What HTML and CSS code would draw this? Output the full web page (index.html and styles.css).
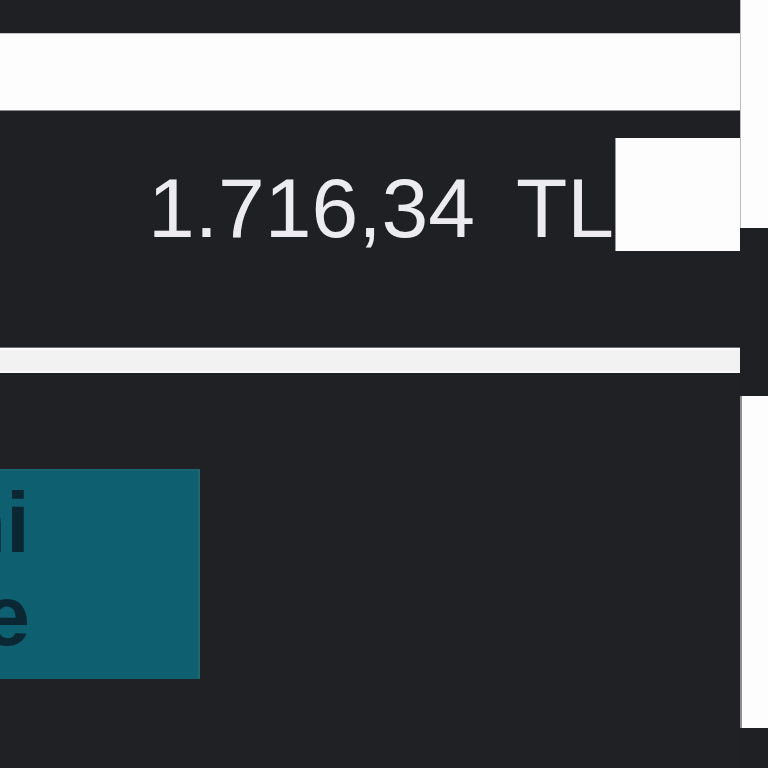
FILE: index.html
```html
<!DOCTYPE html>
<html lang="tr">
<head>
<meta charset="utf-8">
<title>Ödeme</title>
<link rel="stylesheet" href="styles.css">
</head>
<body>
<div class="page">
  <main class="main">
    <div class="top-band"></div>
    <div class="white-band"></div>
    <section class="amount-row">
      <div class="amount"><span class="amount-value">1.716,34</span><span class="amount-currency">TL</span></div>
      <div class="amount-box"></div>
    </section>
    <div class="divider"></div>
    <section class="lower">
      <div class="cta">
        <div class="cta-text">
          <span class="cta-line">Ekstreni</span>
          <span class="cta-line">Görüntüle</span>
        </div>
      </div>
    </section>
  </main>
  <aside class="side">
    <div class="side-top"></div>
    <div class="side-gap"></div>
    <div class="side-panel"></div>
  </aside>
</div>
</body>
</html>
```

FILE: styles.css
```css
html, body {
  margin: 0;
  padding: 0;
  background: #202125;
  overflow: hidden;
}

.page {
  display: grid;
  grid-template-columns: 740px 28px;
  width: 768px;
  height: 768px;
  font-family: "Liberation Sans", Arial, sans-serif;
}

.main {
  display: flex;
  flex-direction: column;
  min-width: 0;
}

.top-band {
  height: 33px;
  background: #1f2023;
}

.white-band {
  height: 76px;
  background: #fdfdfd;
  border-top: 1px solid #c9c9cc;
  border-bottom: 1px solid #8e8e92;
}

.amount-row {
  height: 237px;
  display: flex;
  justify-content: flex-end;
  align-items: flex-start;
  padding-top: 27px;
  box-sizing: border-box;
  background: #1f2024;
}

.amount {
  font-size: 84px;
  line-height: 113px;
  margin-top: 14px;
  margin-right: 1px;
  color: #ececf0;
  white-space: nowrap;
}

.amount-currency {
  margin-left: 41px;
}

.amount-box {
  width: 125px;
  height: 113px;
  background: #fdfdfd;
  border-left: 1px solid #9a9a9e;
  box-sizing: border-box;
}

.divider {
  height: 25px;
  background: #f2f2f3;
  border-top: 2px solid #fafafa;
  border-bottom: 2px solid #fafafa;
  box-sizing: border-box;
  box-shadow: 0 -1px 0 #6a6a70, 0 1px 0 #6a6a70;
}

.lower {
  flex: 1;
  padding-top: 96px;
  background: #202125;
}

.cta {
  width: 200px;
  height: 210px;
  background: #0e5f6f;
  border-top: 2px solid #1b6372;
  border-right: 2px solid #23656f;
  box-sizing: border-box;
  overflow: hidden;
  padding-top: 5px;
}

.cta-text {
  width: 30px;
  display: flex;
  flex-direction: column;
  align-items: flex-end;
  font-size: 86px;
  font-weight: bold;
  line-height: 93px;
  color: #0b2733;
  white-space: nowrap;
}

.side {
  display: flex;
  flex-direction: column;
  background: #1f2023;
}

.side-top {
  height: 228px;
  background: #fdfdfd;
  border-left: 1px solid #bdbdc0;
}

.side-gap {
  height: 168px;
}

.side-panel {
  height: 332px;
  background: #fdfdfd;
  border-left: 2px solid #8f8f93;
}
```
